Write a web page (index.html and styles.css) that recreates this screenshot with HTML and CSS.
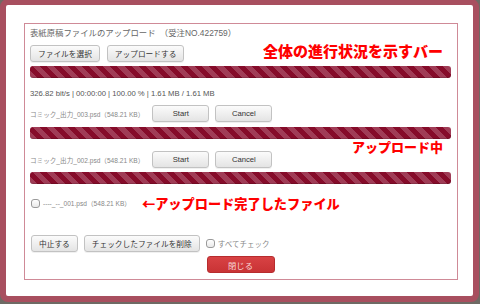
FILE: index.html
```html
<!DOCTYPE html>
<html lang="ja">
<head>
  <meta charset="UTF-8">
  <title>表紙原稿ファイルのアップロード</title>
  <link rel="stylesheet" href="styles.css">
</head>
<body>
  <div class="modal">
    <div class="panel">
      <!-- Header -->
      <div class="title">表紙原稿ファイルのアップロード　（受注NO.422759）</div>

      <div class="btn-row top-row">
        <button class="btn">ファイルを選択</button>
        <button class="btn">アップロードする</button>
      </div>

      <!-- Overall progress -->
      <div class="bar bar-total"></div>
      <div class="status">326.82 bit/s | 00:00:00 | 100.00 % | 1.61 MB / 1.61 MB</div>

      <!-- Files in progress -->
      <div class="file-row row-1">
        <span class="file-name">コミック_出力_003.psd（548.21 KB）</span>
        <button class="btn btn-fixed">Start</button>
        <button class="btn btn-fixed">Cancel</button>
      </div>
      <div class="bar bar-file"></div>

      <div class="file-row row-2">
        <span class="file-name">コミック_出力_002.psd（548.21 KB）</span>
        <button class="btn btn-fixed">Start</button>
        <button class="btn btn-fixed">Cancel</button>
      </div>
      <div class="bar bar-file bar-last"></div>

      <!-- Finished file -->
      <div class="done-row">
        <span class="check"></span>
        <span class="file-name">----_--_001.psd（548.21 KB）</span>
      </div>

      <!-- Footer -->
      <div class="btn-row footer-row">
        <button class="btn">中止する</button>
        <button class="btn">チェックしたファイルを削除</button>
        <label class="check-all"><span class="check"></span>すべてチェック</label>
      </div>
      <div class="close-row">
        <button class="btn-close">閉じる</button>
      </div>

      <!-- Callouts -->
      <div class="note note-total">全体の進行状況を示すバー</div>
      <div class="note note-uploading">アップロード中</div>
      <div class="note note-done">←アップロード完了したファイル</div>
    </div>
  </div>
</body>
</html>
```

FILE: styles.css
```css
* {
  margin: 0;
  padding: 0;
  box-sizing: border-box;
}

body {
  width: 480px;
  height: 304px;
  overflow: hidden;
  background-color: #6e6a64;
  font-family: "Liberation Sans", "Noto Sans CJK JP", sans-serif;
  font-size: 7.7px;
  color: #555;
}

/* Modal frame */
.modal {
  width: 479px;
  height: 303px;
  margin-top: -1px;
  border: 6px solid #a84f5f;
  border-radius: 8px;
  background-color: #fff;
  padding: 18px 15px 16px 18px;
}

/* Inner panel */
.panel {
  position: relative;
  height: 257px;
  border: 1px solid #cf8a97;
  padding: 3px 6px 0 5px;
}

.title {
  height: 12px;
  line-height: 12px;
  font-size: 8.4px;
  color: #666;
}

/* Buttons */
.btn-row {
  display: flex;
  align-items: center;
  gap: 6px;
}

.top-row {
  margin-top: 6px;
  gap: 7px;
}

.btn {
  height: 17px;
  padding: 0 7px;
  font-family: inherit;
  font-size: 7.7px;
  color: #333;
  background: linear-gradient(#fbfbfb, #e4e4e4);
  border: 1px solid #c2c2c2;
  border-radius: 3px;
  box-shadow: 0 1px 0 rgba(0, 0, 0, 0.06);
}

.btn-fixed {
  width: 57px;
}

/* Progress bars */
.bar {
  height: 12px;
  border-radius: 3px;
  background: repeating-linear-gradient(45deg, #a03c56 0 5px, #860c2a 5px 10px);
  box-shadow: inset 0 -1px 0 rgba(0, 0, 0, 0.15);
}

.bar-total {
  margin-top: 4px;
}

.status {
  margin-top: 10px;
  height: 12px;
  line-height: 12px;
}

.file-row {
  display: flex;
  align-items: center;
  gap: 6px;
}

.row-1 {
  margin-top: 5px;
}

.row-2 {
  margin-top: 12px;
}

.file-name {
  font-size: 6.6px;
  color: #888;
  margin-right: 2px;
}

.bar-file {
  margin-top: 5px;
}

.row-2 + .bar-file {
  margin-top: 4px;
}

/* Finished row */
.done-row {
  display: flex;
  align-items: center;
  gap: 3px;
  margin-top: 13px;
  height: 12px;
  padding-left: 1px;
}

.check {
  display: inline-block;
  width: 9px;
  height: 9px;
  border: 1px solid #9a9a9a;
  border-radius: 3px;
  background: linear-gradient(#fff, #e9e9e9);
}

.footer-row {
  margin-top: 26px;
  padding-left: 1px;
}

.check-all {
  display: flex;
  align-items: center;
  gap: 3px;
  font-size: 7.5px;
  color: #888;
}

.close-row {
  display: flex;
  justify-content: center;
  margin-top: 4px;
}

.btn-close {
  width: 68px;
  height: 17px;
  font-family: inherit;
  font-size: 8.3px;
  color: #f8d8d8;
  background: linear-gradient(#d84244, #c93335);
  border: 1px solid #b72c2e;
  border-radius: 3px;
}

/* Red callouts */
.note {
  position: absolute;
  color: #f00;
  font-family: "Noto Sans CJK JP", sans-serif;
  font-weight: 900;
  line-height: 1;
  white-space: nowrap;
}

.note-total {
  left: 238px;
  top: 19px;
  font-size: 15px;
}

.note-uploading {
  left: 327px;
  top: 116px;
  font-size: 13px;
}

.note-done {
  left: 117px;
  top: 173px;
  font-size: 13.2px;
}
```
